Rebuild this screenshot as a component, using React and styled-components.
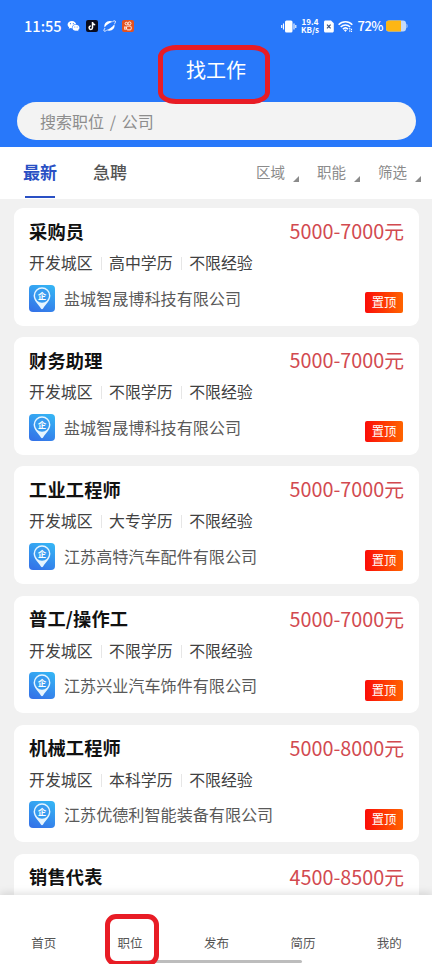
import React from "react";
import styled, { createGlobalStyle } from "styled-components";

const GlobalStyle = createGlobalStyle`
  * {
    box-sizing: border-box;
  }

  body {
    margin: 0;
    font-family: "Noto Sans CJK SC", sans-serif;
    background: #f1f1f1;
  }
`;

const Screen = styled.div`
  width: 432px;
  height: 964px;
  overflow: hidden;
  display: flex;
  flex-direction: column;
  position: relative;
  background: #f1f1f1;
`;

const Header = styled.header`
  flex: none;
  height: 147px;
  padding: 15px 16px 0 17px;
  background: #2878fa;
  color: #fff;
`;

const StatusBar = styled.div`
  display: flex;
  align-items: center;
  height: 22px;
  padding: 0 8px 0 7px;
`;

const Clock = styled.span`
  width: 43px;
  font-size: 14.6px;
  font-weight: 500;
  line-height: 22px;
`;

const StatusIcons = styled.div`
  display: flex;
  align-items: center;
  gap: 5.5px;
  margin-right: auto;

  svg {
    display: block;
  }
`;

const StatusRight = styled.div`
  display: flex;
  align-items: center;
  gap: 4.5px;

  svg {
    display: block;
  }
`;

const Speed = styled.div`
  width: 18px;
  font-size: 8px;
  font-weight: 700;
  line-height: 8px;
  text-align: center;
  white-space: nowrap;
`;

const Percent = styled.span`
  width: 24px;
  font-size: 13px;
  font-weight: 500;
  line-height: 22px;
  letter-spacing: -0.5px;
`;

const Title = styled.h1`
  margin: 18px 0 0;
  height: 30px;
  padding-right: 1px;
  font-size: 20px;
  font-weight: 400;
  line-height: 30px;
  text-align: center;
`;

const SearchBox = styled.div`
  height: 38px;
  margin-top: 17px;
  padding-left: 23px;
  border-radius: 19px;
  background: #f3f3f3;
  color: #8d8d8d;
  font-size: 16px;
  line-height: 38px;
  word-spacing: 2.2px;
`;

const Tabs = styled.nav`
  flex: none;
  display: flex;
  height: 52px;
  padding: 0 11px 0 23px;
  background: #fff;
`;

const Tab = styled.div`
  width: 70px;
  color: ${(props) => (props.$active ? "#2a50c4" : "#555")};
  font-size: 17px;
  font-weight: ${(props) => (props.$active ? 700 : 500)};
  line-height: 50px;

  &::after {
    content: "";
    display: ${(props) => (props.$active ? "block" : "none")};
    width: 30px;
    height: 2px;
    margin: -1px 0 0 2px;
    background: #2a50c4;
  }
`;

const Filters = styled.div`
  display: flex;
  gap: 18px;
  margin-left: auto;
`;

const Filter = styled.div`
  display: flex;
  gap: 8px;
  color: #8b8b8b;
  font-size: 14.5px;
  line-height: 50px;
`;

const Corner = styled.i`
  width: 6px;
  height: 6px;
  margin-top: 29px;
  background: #8b8b8b;
  clip-path: polygon(100% 0, 100% 100%, 0 100%);
`;

const List = styled.main`
  flex: 1;
  min-height: 0;
  overflow: hidden;
  display: flex;
  flex-direction: column;
  gap: 11.7px;
  padding: 9px 13px 0 14px;
`;

const Card = styled.article`
  flex: none;
  height: ${(props) => (props.$peek ? "42px" : "117.5px")};
  padding: 9px 15px 0;
  border-radius: ${(props) => (props.$peek ? "9px 9px 0 0" : "9px")};
  background: #fff;
`;

const CardRow = styled.div`
  display: flex;
  align-items: center;
  justify-content: space-between;
`;

const JobName = styled.h2`
  margin: 0;
  font-size: 18.2px;
  font-weight: 700;
  line-height: 27px;
  letter-spacing: 0.2px;
  color: #111;
`;

const Salary = styled.span`
  font-size: 19.8px;
  line-height: 28px;
  color: #d24a50;
`;

const Requirements = styled.div`
  display: flex;
  height: 24px;
  margin-top: 6px;
  font-size: 15.9px;
  line-height: 24px;
  color: #414141;
`;

const Requirement = styled.span`
  & + & {
    margin-left: 8px;
    padding-left: 8.5px;
    background: linear-gradient(#e6e6e6, #e6e6e6) 0 6px / 1px 13px no-repeat;
  }
`;

const Company = styled.div`
  display: flex;
  align-items: center;
  gap: 9px;
  margin-top: 8px;
  height: 27px;
  font-size: 16.1px;
  line-height: 27px;
  color: #5a5a5a;

  svg {
    display: block;
  }
`;

const Badge = styled.span`
  width: 38px;
  height: 21px;
  margin: 17px 1px 0 0;
  border-radius: 2px;
  background: linear-gradient(90deg, #fb0d08, #ff6400);
  color: #fff;
  font-size: 12.3px;
  line-height: 20px;
  text-align: center;
`;

const BottomNav = styled.nav`
  flex: none;
  display: flex;
  height: 69px;
  background: #fff;
  box-shadow: 0 -2px 8px rgba(0, 0, 0, 0.12);
  position: relative;
`;

const NavItem = styled.span`
  flex: 1;
  padding: 35px 0 0 1px;
  color: #555;
  font-size: 12.5px;
  line-height: 26px;
  text-align: center;
`;

const HomeIndicator = styled.div`
  position: absolute;
  left: 130px;
  bottom: 1px;
  width: 172px;
  height: 3px;
  border-radius: 2px;
  background: #bdbdbd;
`;

const Marker = styled.div`
  position: absolute;
  left: ${(props) => props.$x}px;
  top: ${(props) => props.$y}px;
  width: ${(props) => props.$w}px;
  height: ${(props) => props.$h}px;
  border: 5px solid #e81c25;
  border-radius: ${(props) => props.$r};
`;

const jobs = [
  ["采购员", "5000-7000元", "高中学历", "盐城智晟博科技有限公司"],
  ["财务助理", "5000-7000元", "不限学历", "盐城智晟博科技有限公司"],
  ["工业工程师", "5000-7000元", "大专学历", "江苏高特汽车配件有限公司"],
  ["普工/操作工", "5000-7000元", "不限学历", "江苏兴业汽车饰件有限公司"],
  ["机械工程师", "5000-8000元", "本科学历", "江苏优德利智能装备有限公司"],
  ["销售代表", "4500-8500元"],
];

const WechatIcon = () => (
  <svg width="13" height="12" viewBox="0 0 13 12">
    <path
      d="M5 1C2.500 1 .6 2.600.6 4.600c0 1.100.6 2 1.500 2.700L1.800 8.800l1.600-.8c.5.1 1 .2 1.500.2C4.600 5.900 6.300 4.200 9.200 4.200 8.800 2.300 7.100 1 5 1z"
      fill="#fff"
    />
    <path
      d="M8.900 4.800c-2 0-3.500 1.300-3.500 3s1.500 3 3.500 3c.4 0 .8-.1 1.200-.2l1.300.7-.3-1.200c.8-.6 1.300-1.400 1.300-2.300 0-1.700-1.600-3-3.500-3z"
      fill="#fff"
    />
    <g fill="#2878fa">
      <circle cx="3.500" cy="3.700" r=".6" />
      <circle cx="6.300" cy="3.700" r=".6" />
      <circle cx="7.800" cy="7" r=".5" />
      <circle cx="10.100" cy="7" r=".5" />
    </g>
  </svg>
);

const TiktokIcon = () => (
  <svg width="12" height="12" viewBox="0 0 12 12">
    <rect width="12" height="12" rx="2" fill="#090b1d" />
    <path
      d="M6.500 2v5.700a1.700 1.700 0 1 1-1.700-1.700M6.500 2.300c.2 1.400 1.100 2.200 2.700 2.400"
      fill="none"
      stroke="#fff"
      strokeWidth="1.500"
    />
  </svg>
);

const PlanetIcon = () => (
  <svg width="13" height="12" viewBox="0 0 13 12">
    <path
      d="M1.600 7.600C.6 4.300 3.200 1.200 6.800 1.100c1.100 0 2 .2 2.800.7C6.500 2.700 3.600 4.800 1.600 7.600z"
      fill="#fff"
    />
    <path
      d="M11.400 4.300c1 3.300-1.600 6.400-5.200 6.500-1.100 0-2-.2-2.800-.7 3.100-.9 6-3 8-5.800z"
      fill="#fff"
    />
    <path
      d="M2 8.100C.8 9.800.5 11.100 1.500 11.200c.6 0 1.300-.3 2.100-.8M9.500 1.700c1.500-.9 2.600-1.200 2.900-.5.200.6-.1 1.500-.8 2.600"
      fill="none"
      stroke="#fff"
      strokeWidth=".9"
    />
  </svg>
);

const VideoIcon = () => (
  <svg width="12" height="12" viewBox="0 0 12 12">
    <rect width="12" height="12" rx="2" fill="#e4521f" />
    <g fill="none" stroke="#fff" strokeWidth=".9">
      <circle cx="4.400" cy="3.600" r="1.300" />
      <circle cx="7.500" cy="3.400" r="1.500" />
      <rect x="4.600" y="6.100" width="4.600" height="3.800" rx="1" />
      <path d="M4.600 7.700 2.700 6.700v2.700l1.900-.8" />
    </g>
  </svg>
);

const VibrateIcon = () => (
  <svg width="16" height="13" viewBox="0 0 16 13">
    <rect x="4" y=".5" width="7.500" height="12" rx="1.500" fill="#fff" />
    <path
      d="M2.500 3.500v6M.7 5v3M13 3.500v6M14.800 5v3"
      stroke="#fff"
      strokeWidth="1.100"
    />
  </svg>
);

const SimIcon = () => (
  <svg width="10" height="13" viewBox="0 0 10 13">
    <path
      d="M1.500.5H7L9.800 3.200V11c0 .9-.6 1.500-1.500 1.500H1.500C.6 12.500 0 11.900 0 11V2C0 1.100.6.500 1.500.5z"
      fill="#fff"
    />
    <path d="M3 4.700l3.600 3.600M6.600 4.700 3 8.300" stroke="#39527c" strokeWidth="1.200" />
  </svg>
);

const WifiIcon = () => (
  <svg width="15" height="13" viewBox="0 0 15 13">
    <g fill="none" stroke="#fff" strokeWidth="1.500">
      <path d="M.6 4.700c3.800-4 9.900-4 13.700 0" />
      <path d="M2.700 7c2.700-2.800 6.800-2.800 9.500 0" />
      <path d="M4.900 9.100c1.500-1.500 3.600-1.500 5.100 0" />
    </g>
    <path d="M5.800 10.100c1-.8 2.200-.8 3.200 0l-1.600 1.800z" fill="#fff" />
    <path
      d="M11.800 8v4M13.500 8.800v3.200"
      stroke="#fff"
      strokeWidth="1.100"
      strokeDasharray="1.500 .7"
    />
  </svg>
);

const BatteryIcon = () => (
  <svg width="22" height="12" viewBox="0 0 22 12">
    <rect x="0" y=".5" width="20" height="11" rx="3" fill="#c5dafa" />
    <path
      d="M3 .5h12v11H3a3 3 0 0 1-3-3v-5a3 3 0 0 1 3-3z"
      fill="#fdb614"
    />
    <path d="M20.500 3.500c1.300.7 1.300 4.300 0 5z" fill="#c5dafa" />
  </svg>
);

const CompanyIcon = () => (
  <svg width="26" height="27" viewBox="0 0 26 27">
    <defs>
      <linearGradient id="company" x1="0.700" y1="0" x2="0.300" y2="1">
        <stop offset="0" stopColor="#35b2f4" />
        <stop offset="1" stopColor="#3474e8" />
      </linearGradient>
    </defs>
    <rect width="26" height="27" rx="4" fill="url(#company)" />
    <path
      d="M13 2.200a8.400 8.400 0 0 0-8.400 8.400c0 5.200 4.600 8.400 7.300 12.800q1.100 1.500 2.200 0c2.700-4.400 7.300-7.600 7.300-12.800A8.400 8.400 0 0 0 13 2.200z"
      fill="#e6f5ff"
    />
    <circle cx="13" cy="10.800" r="7" fill="#379bf0" />
    <text
      x="13"
      y="14"
      fill="#fff"
      fontSize="8.500"
      fontWeight="700"
      textAnchor="middle"
    >
      企
    </text>
  </svg>
);

const JobCard = ({ name, salary, education, company }) => {
  return (
    <Card $peek={!company}>
      <CardRow>
        <JobName>{name}</JobName>
        <Salary>{salary}</Salary>
      </CardRow>
      {company && (
        <>
          <Requirements>
            <Requirement>开发城区</Requirement>
            <Requirement>{education}</Requirement>
            <Requirement>不限经验</Requirement>
          </Requirements>
          <CardRow>
            <Company>
              <CompanyIcon />
              {company}
            </Company>
            <Badge>置顶</Badge>
          </CardRow>
        </>
      )}
    </Card>
  );
};

const App = () => {
  return (
    <>
      <GlobalStyle />
      <Screen>
        <Header>
          <StatusBar>
            <Clock>11:55</Clock>
            <StatusIcons>
              <WechatIcon />
              <TiktokIcon />
              <PlanetIcon />
              <VideoIcon />
            </StatusIcons>
            <StatusRight>
              <VibrateIcon />
              <Speed>
                19.4
                <br />
                KB/s
              </Speed>
              <SimIcon />
              <WifiIcon />
              <Percent>72%</Percent>
              <BatteryIcon />
            </StatusRight>
          </StatusBar>
          <Title>找工作</Title>
          <SearchBox>搜索职位 / 公司</SearchBox>
        </Header>
        <Tabs>
          <Tab $active>最新</Tab>
          <Tab>急聘</Tab>
          <Filters>
            {["区域", "职能", "筛选"].map((label) => (
              <Filter key={label}>
                {label}
                <Corner />
              </Filter>
            ))}
          </Filters>
        </Tabs>
        <List>
          {jobs.map(([name, salary, education, company]) => (
            <JobCard
              key={name}
              name={name}
              salary={salary}
              education={education}
              company={company}
            />
          ))}
        </List>
        <BottomNav>
          {["首页", "职位", "发布", "简历", "我的"].map((label) => (
            <NavItem key={label}>{label}</NavItem>
          ))}
          <HomeIndicator />
        </BottomNav>
        <Marker $x={158} $y={45} $w={112} $h={59} $r="18px / 12px" />
        <Marker $x={105} $y={914} $w={54} $h={52} $r="11px" />
      </Screen>
    </>
  );
};

export default App;
